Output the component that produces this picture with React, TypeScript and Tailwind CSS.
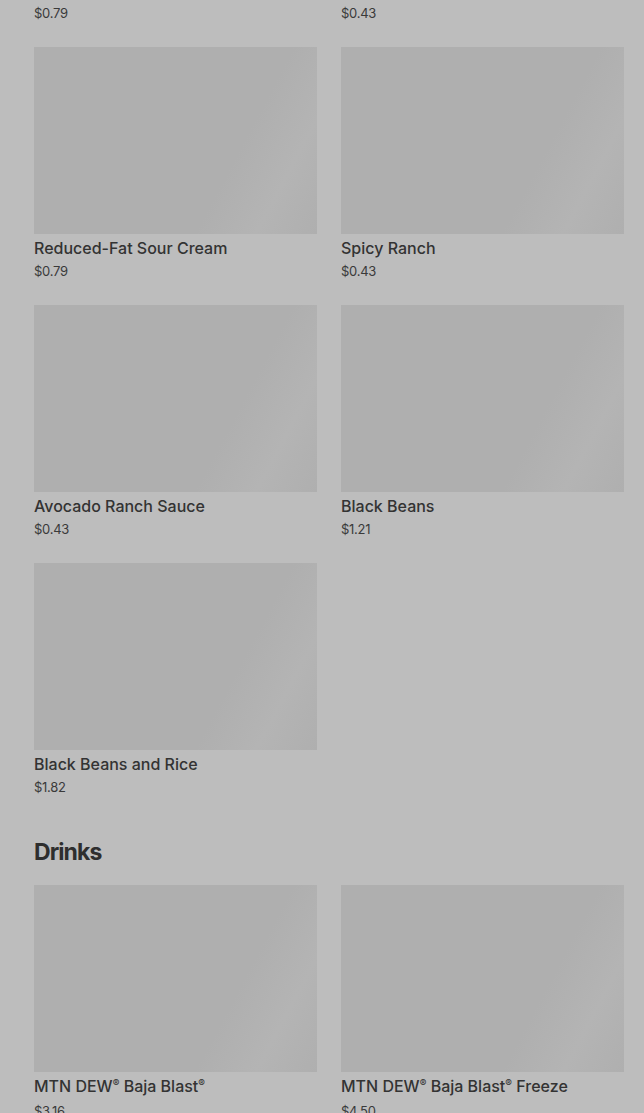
import React from 'react';

interface Item {
  name: string;
  price: string;
}

const sides: Item[] = [
  { name: 'Sour Cream', price: '$0.79' },
  { name: 'Creamy Jalapeño Sauce', price: '$0.43' },
  { name: 'Reduced-Fat Sour Cream', price: '$0.79' },
  { name: 'Spicy Ranch', price: '$0.43' },
  { name: 'Avocado Ranch Sauce', price: '$0.43' },
  { name: 'Black Beans', price: '$1.21' },
  { name: 'Black Beans and Rice', price: '$1.82' },
];

const drinks: Item[] = [
  { name: 'MTN DEW® Baja Blast®', price: '$3.16' },
  { name: 'MTN DEW® Baja Blast® Freeze', price: '$4.50' },
];

// small raised ® like the reference
function Name({ text }: { text: string }) {
  const parts = text.split('®');
  return (
    <>
      {parts.map((p, i) => (
        <React.Fragment key={i}>
          {p}
          {i < parts.length - 1 && <span className="relative -top-[5px] text-[10px]">®</span>}
        </React.Fragment>
      ))}
    </>
  );
}

function ItemCard({ item }: { item: Item }) {
  return (
    <div className="flex flex-col">
      <div className="h-[187px] w-full bg-[linear-gradient(118deg,#afafaf_68%,#b4b4b4_84%,#afafaf_100%)]" />
      <p className="mt-[3px] text-[16px] leading-[22px] font-medium text-[#333333] truncate">
        <Name text={item.name} />
      </p>
      <p className="text-[13px] leading-[24px] text-[#3a3a3a] tracking-[-0.02em]">{item.price}</p>
    </div>
  );
}

export default function App() {
  return (
    <div className="h-[1113px] w-full overflow-hidden bg-[#bdbdbd]" style={{ fontFamily: 'Inter, "Noto Sans", sans-serif' }}>
      <div className="-mt-[211px] px-[34px] pr-[20px]">
        <div className="grid grid-cols-2 gap-x-[24px] gap-y-[22px]">
          {sides.map((item) => (
            <ItemCard key={item.name} item={item} />
          ))}
        </div>
        <h2 className="mt-[37px] text-[23px] leading-[32px] font-bold tracking-[-0.04em] text-[#2e2e2e]">Drinks</h2>
        <div className="mt-[17px] grid grid-cols-2 gap-x-[24px] gap-y-[22px]">
          {drinks.map((item) => (
            <ItemCard key={item.name} item={item} />
          ))}
        </div>
      </div>
    </div>
  );
}
